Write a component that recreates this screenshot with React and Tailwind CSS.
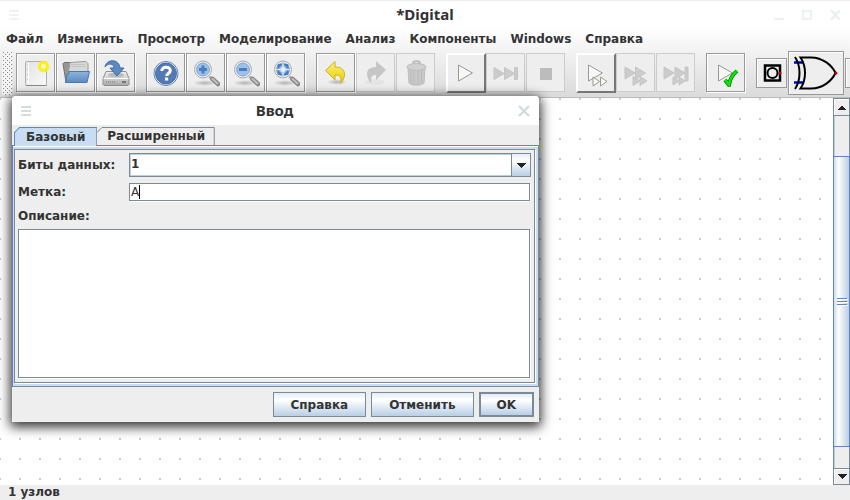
import React from "react";

const frames = {
  normal: "mr-px h-[39px] w-[39px] border border-[#999] shadow-[inset_1px_1px_0_#fff,1px_1px_0_#fff]",
  disabled: "mr-px h-[39px] w-[39px] border border-[#ccc]",
  raised: "h-10 w-10 border-2 border-t-white border-l-white border-r-[#777] border-b-[#777]",
};

function ToolButton({ label, kind = "normal", children }) {
  return (
    <button
      type="button"
      aria-label={label}
      disabled={kind === "disabled"}
      className={`flex shrink-0 items-center justify-center bg-[#eee] ${frames[kind]}`}
    >
      <svg width="28" height="28" viewBox="0 0 28 28" fill="none" className="shrink-0">
        {children}
      </svg>
    </button>
  );
}

function Defs() {
  return (
    <svg width="0" height="0" className="absolute" aria-hidden="true">
      <defs>
        <linearGradient id="paper" x1="0" y1="0" x2="1" y2="1">
          <stop offset="0" stopColor="#e2e2e2" />
          <stop offset="1" stopColor="#fafafa" />
        </linearGradient>
        <radialGradient id="sun">
          <stop offset="0" stopColor="#ffffff" />
          <stop offset=".3" stopColor="#fffa90" />
          <stop offset=".5" stopColor="#f8ee1c" />
          <stop offset=".75" stopColor="#f8ee1c" />
          <stop offset="1" stopColor="#f8ee1c" stopOpacity="0" />
        </radialGradient>
        <linearGradient id="folder" x1="0" y1="0" x2="0" y2="1">
          <stop offset="0" stopColor="#8fb4dc" />
          <stop offset="1" stopColor="#5a8ac4" />
        </linearGradient>
        <linearGradient id="metal" x1="0" y1="0" x2="0" y2="1">
          <stop offset="0" stopColor="#f0f0ef" />
          <stop offset="1" stopColor="#aaa" />
        </linearGradient>
        <linearGradient id="gold" x1="0" y1="0" x2="0" y2="1">
          <stop offset="0" stopColor="#fdf07a" />
          <stop offset="1" stopColor="#e9cb00" />
        </linearGradient>
        <radialGradient id="shade">
          <stop offset="0" stopColor="#000" stopOpacity=".25" />
          <stop offset="1" stopColor="#000" stopOpacity="0" />
        </radialGradient>
      </defs>
    </svg>
  );
}

function NewIcon() {
  return (
    <>
      <rect x="3.5" y="2.5" width="21" height="24" rx="1" fill="url(#paper)" stroke="#b0b0ae" />
      <path d="M4 26.500h20.500" stroke="#888" />
      <path d="M6.500 4v21" stroke="#fff" />
      <path d="M5.500 5v20" stroke="#c5c5c5" strokeDasharray="1 4" />
      <circle cx="21.500" cy="7.500" r="6.500" fill="url(#sun)" />
    </>
  );
}

function OpenIcon() {
  return (
    <>
      <path d="M1 4.500l1-1h7l1 2h15v7L5 23.500H4z" fill="#969694" stroke="#70706e" />
      <path d="M8 3.500l16-1 2 2v11H6z" fill="#d8d8d6" stroke="#999" />
      <path d="M9 5.500h14M8.500 7.500h15" stroke="#c4c4c4" />
      <path d="M7 12.500h20.500L25 23.500H3.500L5 15h2z" fill="url(#folder)" stroke="#4a79b4" />
    </>
  );
}

function SaveIcon() {
  return (
    <>
      <path d="M4 12.500h20l3 7v6l-1 1H2l-1-1v-6z" fill="url(#metal)" stroke="#90908e" />
      <path d="M1.500 19.500h25" stroke="#fff" />
      <path d="M4 23h9" stroke="#999" strokeWidth="2" strokeDasharray="1 1" />
      <path d="M20 23h4" stroke="#777" strokeWidth="2" />
      <ellipse cx="14" cy="16" rx="8" ry="2.500" fill="#bbb" />
      <path d="M3 8C4 0 17-1 18 9h4l-7 8-7-8h4C12 5 7 3 3 8z" fill="#5b8ac0" stroke="#3f6ca6" />
    </>
  );
}

function HelpIcon() {
  return (
    <>
      <circle cx="14" cy="14.500" r="12" fill="#fff" stroke="#5f80b4" />
      <circle cx="14" cy="14.500" r="10.500" fill="#5579b2" stroke="#416aa6" />
      <path
        d="M9.800 12C9.800 7 18.300 7 18.300 11.500c0 3-3.600 3-3.600 5.500"
        stroke="#fff"
        strokeWidth="3"
      />
      <rect x="13" y="18.500" width="3.200" height="3" fill="#fff" />
    </>
  );
}

function ZoomIcon({ mark }) {
  return (
    <>
      <ellipse cx="13" cy="24" rx="12" ry="3" fill="url(#shade)" />
      <path d="M17.500 17.500l3 3" stroke="#aaa" strokeWidth="3" />
      <path d="M20.500 20l5.500 5" stroke="#888" strokeWidth="4.500" strokeLinecap="round" />
      <path d="M20.500 20l5 4.500" stroke="#c0c0c0" strokeWidth="2" strokeLinecap="round" />
      <circle cx="11" cy="10.500" r="8.500" fill="#eef2f6" stroke="#a8a8a6" />
      <circle cx="11" cy="10.500" r="6.500" fill="#9dc0e8" stroke="#7fa6d6" />
      {mark === "plus" && <path d="M11 6.500v8M7 10.500h8" stroke="#4a7dbd" strokeWidth="3" />}
      {mark === "minus" && <path d="M7 10.500h8" stroke="#4a7dbd" strokeWidth="3" />}
      {mark === "fit" && (
        <>
          <path
            d="M6 9.500V5.500h4zM12 5.500h4v4zM6 11.500v4h4zM12 15.500h4v-4z"
            fill="#4a7dbd"
            stroke="#4a7dbd"
          />
          <path d="M11 4v4M11 13v4M4.500 10.500h4M13.500 10.500h4" stroke="#e4eefa" />
          <circle cx="11" cy="10.500" r="2.500" fill="#e4eefa" />
        </>
      )}
    </>
  );
}

function UndoIcon() {
  return (
    <>
      <ellipse cx="15" cy="23" rx="10" ry="3" fill="url(#shade)" />
      <path
        d="M3.500 11.500l9.500-9v5.500c11 0 12 9 5.500 16.500 1-6 .500-8.500-5.500-8.500v5z"
        fill="url(#gold)"
        stroke="#cdb41c"
      />
    </>
  );
}

function RedoIcon() {
  return (
    <>
      <ellipse cx="13" cy="23" rx="10" ry="3" fill="#e4e4e4" />
      <path d="M24 11L14 2v6C3 8 3 17 9.500 24.500c-1-6-.500-8.500 4.500-8.500v5z" fill="#c6c6c6" />
    </>
  );
}

function TrashIcon() {
  return (
    <>
      <path d="M6 9h17l-1 15c-3 3-12 3-15 0z" fill="#cacaca" stroke="#bcbcbc" />
      <path d="M9 11v13M12 11v14M16 11v14M19.500 11v13" stroke="#b7b7b7" />
      <ellipse cx="14.500" cy="8" rx="9.500" ry="3.500" fill="#d0d0d0" stroke="#bbb" />
      <path d="M11 4.500c0-3 7-3 7 0" stroke="#bbb" strokeWidth="2" />
    </>
  );
}

const outline = { fill: "#f8f8f5", stroke: "#989898" };

function PlayIcon() {
  return <path d="M6.500 6v16l14-8z" {...outline} />;
}

function FastToEndIcon() {
  return (
    <path
      d="M2 8.500v12l10-6zM12.500 8.500v12l10-6zM22.500 8.500h3v12h-3z"
      fill="#ccc"
      stroke="#c4c4c4"
    />
  );
}

function StopIcon() {
  return <rect x="8" y="9" width="12" height="12" fill="#bcbcbc" />;
}

function MicroStepIcon() {
  return (
    <>
      <path d="M6.500 6v16l14-8z" {...outline} />
      <path d="M11 18v9l6.500-4.500zM18.500 18v9l6.500-4.500z" {...outline} />
    </>
  );
}

function MicroFastIcon() {
  return (
    <path
      d="M3 8v12l10-6zM13.500 8v12l10-6zM11 17.500v9l7-4.500zM18 17.500v9l7-4.500z"
      fill="#ccc"
      stroke="#c4c4c4"
    />
  );
}

function MicroEndIcon() {
  return (
    <path
      d="M2 8v12l10-6zM13 8v12l10-6zM23 8h3v14h-3zM11 18v8l6-4zM17 18v8l6-4z"
      fill="#ccc"
      stroke="#c4c4c4"
    />
  );
}

function TestIcon() {
  return (
    <>
      <path d="M6.500 6v16l14-8z" {...outline} />
      <path d="M13 21l4 5c1-6 4-11 8-14" stroke="#007c00" strokeWidth="4" />
      <path d="M13 21l4 5c1-6 4-11 8-14" stroke="#0ce40c" strokeWidth="2.500" />
    </>
  );
}

function Menu() {
  const items = [
    "Файл",
    "Изменить",
    "Просмотр",
    "Моделирование",
    "Анализ",
    "Компоненты",
    "Windows",
    "Справка",
  ];
  return (
    <nav className="flex h-[22px] items-center gap-3.5 px-1.5 whitespace-nowrap">
      {items.map((item) => (
        <button key={item} type="button" className="font-bold">
          {item}
        </button>
      ))}
    </nav>
  );
}

function Group({ children }) {
  return <div className="flex h-10 shrink-0">{children}</div>;
}

function Toolbar() {
  return (
    <div className="flex h-[47px] items-center gap-2.5 overflow-hidden pb-px pl-0.5">
      <div className="-mr-1.5 h-11 w-[10px] shrink-0 bg-[#f4f4f4] bg-[conic-gradient(from_270deg_at_1px_1px,#888_90deg,transparent_0),conic-gradient(from_270deg_at_1px_1px,#888_90deg,transparent_0)] bg-[size:4px_4px] bg-[position:1px_1px,3px_3px]" />
      <Group>
        <ToolButton label="Новый"><NewIcon /></ToolButton>
        <ToolButton label="Открыть"><OpenIcon /></ToolButton>
        <ToolButton label="Сохранить"><SaveIcon /></ToolButton>
      </Group>
      <Group>
        <ToolButton label="Помощь"><HelpIcon /></ToolButton>
        <ToolButton label="Увеличить"><ZoomIcon mark="plus" /></ToolButton>
        <ToolButton label="Уменьшить"><ZoomIcon mark="minus" /></ToolButton>
        <ToolButton label="Вписать"><ZoomIcon mark="fit" /></ToolButton>
      </Group>
      <Group>
        <ToolButton label="Отменить действие"><UndoIcon /></ToolButton>
        <ToolButton label="Повторить" kind="disabled"><RedoIcon /></ToolButton>
        <ToolButton label="Удалить" kind="disabled"><TrashIcon /></ToolButton>
      </Group>
      <Group>
        <ToolButton label="Запуск" kind="raised"><PlayIcon /></ToolButton>
        <ToolButton label="До останова" kind="disabled"><FastToEndIcon /></ToolButton>
        <ToolButton label="Стоп" kind="disabled"><StopIcon /></ToolButton>
      </Group>
      <Group>
        <ToolButton label="Шаг" kind="raised"><MicroStepIcon /></ToolButton>
        <ToolButton label="Быстрый шаг" kind="disabled"><MicroFastIcon /></ToolButton>
        <ToolButton label="Шаги до конца" kind="disabled"><MicroEndIcon /></ToolButton>
      </Group>
      <Group>
        <ToolButton label="Тест"><TestIcon /></ToolButton>
      </Group>
      <div className="flex shrink-0 items-center gap-px">
        <button
          type="button"
          aria-label="Вход"
          className="flex h-[30px] w-[31px] items-center justify-center border border-[#999] bg-[#eee] shadow-[inset_1px_1px_0_#fff]"
        >
          <svg width="20" height="18" viewBox="0 0 20 18" fill="none" className="shrink-0">
            <rect x="3" y="1.500" width="15" height="15" stroke="#000" strokeWidth="2.500" />
            <circle cx="10.500" cy="9" r="5" stroke="#000" strokeWidth="2" />
            <circle cx="18" cy="9" r="1.500" fill="#c00" />
          </svg>
        </button>
        <button
          type="button"
          aria-label="Исключающее ИЛИ"
          className="flex h-11 w-14 items-center justify-center border border-[#999] bg-[#eee] shadow-[inset_1px_1px_0_#fff]"
        >
          <svg width="46" height="34" viewBox="0 0 46 34" fill="none" className="shrink-0">
            <path d="M1 6.500h9M1 26.500h9" stroke="#00c" strokeWidth="2.500" />
            <path
              d="M2 1c6 9 6 23 0 32M7.500 1.500c6 9 6 22 0 31H18c12 0 21-8 24.500-15.500C39 9.500 30 1.500 18 1.500z"
              stroke="#000"
              strokeWidth="2"
            />
            <circle cx="43" cy="17" r="1.500" fill="#c00" />
          </svg>
        </button>
        <button
          type="button"
          aria-label="Далее"
          className="h-[30px] w-[31px] border border-[#999] bg-[#eee] shadow-[inset_1px_1px_0_#fff]"
        />
      </div>
    </div>
  );
}

function Arrow({ up }) {
  return (
    <svg
      width="10"
      height="5"
      viewBox="0 0 10 5"
      fill="#222"
      shapeRendering="crispEdges"
      className="shrink-0"
    >
      {up ? <path d="M1 5l3-4h2l3 4z" /> : <path d="M0 0h10L5 5z" />}
    </svg>
  );
}

function ScrollBar() {
  return (
    <div className="flex w-[17px] shrink-0 flex-col border-x border-[#7a8a99] bg-[#eee] shadow-[inset_1px_0_0_#b8cfe5]">
      <button
        type="button"
        aria-label="Вверх"
        className="flex h-[18px] items-center justify-center border-y border-[#7a8a99] bg-[#eee] shadow-[inset_1px_1px_0_#fff]"
      >
        <Arrow up />
      </button>
      <div className="h-10" />
      <div className="-mx-px flex flex-1 flex-col items-center justify-center gap-0.5 border border-[#6382bf] bg-linear-to-r from-[#c8ddf2] via-white via-30% to-[#b8cfe5]">
        <i className="h-px w-2.5 bg-[#6382bf] shadow-[1px_1px_0_#fff]" />
        <i className="h-px w-2.5 bg-[#6382bf] shadow-[1px_1px_0_#fff]" />
        <i className="h-px w-2.5 bg-[#6382bf] shadow-[1px_1px_0_#fff]" />
      </div>
      <div className="h-[21px]" />
      <button
        type="button"
        aria-label="Вниз"
        className="flex h-[17px] items-center justify-center border-y border-[#7a8a99] bg-[#eee] shadow-[inset_1px_1px_0_#fff]"
      >
        <Arrow />
      </button>
    </div>
  );
}

function DialogButton({ children, primary }) {
  return (
    <button
      type="button"
      className={`h-[25px] border-[#7a8a99] bg-linear-to-b from-[#e4ecf5] via-white via-30% to-[#b8cfe5] font-bold ${
        primary ? "border-2 px-4" : "border px-[17px]"
      }`}
    >
      {children}
    </button>
  );
}

function Burger({ className }) {
  return (
    <svg width="10" height="10" viewBox="0 0 10 10" className={className}>
      <path d="M0 0h10v2H0zM0 4h10v2H0zM0 8h10v2H0z" />
    </svg>
  );
}

function Dialog() {
  const sunken = "border border-[#7a8a99] bg-white shadow-[1px_1px_0_#fff] outline-none";
  return (
    <section
      role="dialog"
      aria-label="Ввод"
      className="absolute top-24 left-3 flex h-[326px] w-[527px] flex-col rounded-t-sm bg-[#eee] shadow-[0_3px_12px_2px_rgba(0,0,0,0.8)]"
    >
      <header className="flex h-[29px] shrink-0 items-center justify-between rounded-t-sm bg-white px-[9px]">
        <Burger className="fill-[#d5dcdf]" />
        <h2 className="pb-0.5 font-['Noto_Sans',sans-serif] text-[15px] font-bold">Ввод</h2>
        <button type="button" aria-label="Закрыть">
          <svg width="12" height="12" viewBox="0 0 12 12" stroke="#cfd8dc" strokeWidth="2">
            <path d="M1 1l10 10M11 1L1 11" />
          </svg>
        </button>
      </header>
      <div role="tablist" className="flex h-5 shrink-0 items-end pt-0.5 pl-0.5">
        <button type="button" role="tab" aria-selected="true" className="relative z-10 -mb-px h-[19px]">
          <svg className="absolute inset-0 h-full w-full" viewBox="0 0 83 19" preserveAspectRatio="none">
            <path d="M.5 19V5.500l5-5h77V19" fill="#c8ddf2" stroke="#6382bf" />
          </svg>
          <span className="relative block px-3 leading-[18px] font-bold">Базовый</span>
        </button>
        <button type="button" role="tab" aria-selected="false" className="relative h-[18px]">
          <svg className="absolute inset-0 h-full w-full" viewBox="0 0 119 18" preserveAspectRatio="none">
            <path d="M0 5.500l5-5h113.500V18" fill="none" stroke="#7a8a99" />
          </svg>
          <span className="relative block px-2.5 leading-[18px] font-bold">Расширенный</span>
        </button>
      </div>
      <div className="flex min-h-0 flex-1 border border-t-[#6382bf] border-r-[#7a8a99] border-b-[#7a8a99] border-l-[#6382bf] bg-[#c8ddf2] pt-[3px] pr-[3px] pb-[3px] pl-px shadow-[inset_0_1px_0_#fff]">
        <form className="flex flex-1 flex-col border border-[#7a8a99] bg-[#eee] px-[3px] pt-[3px] pb-1 shadow-[1px_1px_0_#fff]">
          <div className="grid grid-cols-[111px_1fr] items-center gap-y-1.5">
            <label htmlFor="bits" className="font-bold">
              Биты данных:
            </label>
            <div className="grid h-6 grid-cols-[1fr_19px] border border-[#7a8a99]">
              <select
                id="bits"
                className="col-span-2 col-start-1 row-start-1 appearance-none border border-[#b8cfe5] bg-white pb-0.5 font-bold outline-none"
              >
                <option>1</option>
              </select>
              <span className="pointer-events-none col-start-2 row-start-1 flex items-center justify-center border-l border-[#7a8a99] bg-linear-to-b from-[#e4ecf5] via-white via-30% to-[#b8cfe5]">
                <Arrow />
              </span>
            </div>
            <label htmlFor="label" className="font-bold">
              Метка:
            </label>
            <div className="relative mr-px flex">
              <input id="label" defaultValue="A" className={`h-[18px] w-full px-px ${sunken}`} />
              <i className="absolute top-0.5 left-2.5 h-3.5 w-px bg-black" />
            </div>
          </div>
          <label htmlFor="description" className="mt-1.5 mb-1 leading-[18px] font-bold">
            Описание:
          </label>
          <textarea id="description" className={`mr-px flex-1 resize-none ${sunken}`} />
        </form>
      </div>
      <footer className="flex h-[35px] shrink-0 items-center justify-end gap-[5px] pr-[5px]">
        <DialogButton>Справка</DialogButton>
        <DialogButton>Отменить</DialogButton>
        <DialogButton primary>OK</DialogButton>
      </footer>
    </section>
  );
}

export default function App() {
  return (
    <div className="relative flex h-screen flex-col overflow-hidden bg-[#eee] font-['DejaVu_Sans',sans-serif] text-[12px] leading-4 text-[#333]">
      <Defs />
      <header className="grid h-7 shrink-0 grid-cols-[1fr_auto_1fr] items-center border-t border-[#eee] bg-white px-[9px]">
        <Burger className="fill-[#f0f3f3]" />
        <h1 className="pb-0.5 font-['Noto_Sans',sans-serif] text-[15px] font-bold">*Digital</h1>
        <div className="flex justify-end gap-[18px]">
          <button type="button" aria-label="Свернуть">
            <svg width="10" height="10" fill="#edf1f2"><path d="M0 8h10v2H0z" /></svg>
          </button>
          <button type="button" aria-label="Развернуть">
            <svg width="10" height="10" fill="none" stroke="#edf1f2" strokeWidth="2">
              <path d="M1 1h8v8H1z" />
            </svg>
          </button>
          <button type="button" aria-label="Закрыть окно">
            <svg width="11" height="10" stroke="#e8edef" strokeWidth="2"><path d="M1 0l9 10M10 0L1 10" /></svg>
          </button>
        </div>
      </header>
      <div className="shrink-0 border-b border-[#bbb] bg-linear-to-b from-white to-[#dadada]">
        <Menu />
        <Toolbar />
      </div>
      <main className="flex min-h-0 flex-1">
        <div className="flex-1 bg-white bg-[conic-gradient(from_270deg_at_2px_2px,#ccc_90deg,transparent_0)] bg-[size:20px_20px] bg-[position:-1px_0]" />
        <ScrollBar />
      </main>
      <footer className="h-[15px] shrink-0 px-2 leading-[15px] font-bold">1 узлов</footer>
      <Dialog />
    </div>
  );
}
